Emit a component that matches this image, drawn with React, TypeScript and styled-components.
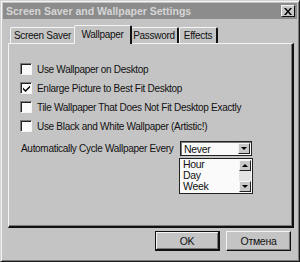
import React from 'react';
import styled, { createGlobalStyle } from 'styled-components';

const GlobalStyle = createGlobalStyle`
  html, body {
    margin: 0;
    padding: 0;
    background: #c4c4c4;
  }
  * {
    box-sizing: border-box;
  }
`;

const options = [
  { label: 'Use Wallpaper on Desktop', checked: false },
  { label: 'Enlarge Picture to Best Fit Desktop', checked: true },
  { label: 'Tile Wallpaper That Does Not Fit Desktop Exactly', checked: false },
  { label: 'Use Black and White Wallpaper (Artistic!)', checked: false },
];

const tabs = [
  { label: 'Screen Saver', width: 66 },
  { label: 'Wallpaper', width: 54 },
  { label: 'Password', width: 49 },
  { label: 'Effects', width: 39 },
];

const App = () => {
  return (
    <>
      <GlobalStyle />
      <Window>
        <TitleBar>
          <TitleText>Screen Saver and Wallpaper Settings</TitleText>
          <CloseButton>
            <svg width="8" height="7" viewBox="0 0 8 7">
              <path d="M0 0h2l2 2.5L6 0h2L5 3.5 8 7H6L4 4.5 2 7H0l3-3.5z" fill="#000" />
            </svg>
          </CloseButton>
        </TitleBar>
        <Body>
          <TabRow>
            {tabs.map((t) => (
              <Tab key={t.label} $width={t.width} $active={t.label === 'Wallpaper'}>
                {t.label}
              </Tab>
            ))}
          </TabRow>
          <Panel>
            <CheckList>
              {options.map((o) => (
                <CheckRow key={o.label}>
                  <CheckBox>
                    {o.checked && (
                      <svg width="7" height="7" viewBox="0 0 7 7">
                        <path d="M0 2.5l2.5 2.5L7 0.5v2L2.5 7 0 4.5z" fill="#000" />
                      </svg>
                    )}
                  </CheckBox>
                  <CheckLabel>{o.label}</CheckLabel>
                </CheckRow>
              ))}
            </CheckList>
            <CycleRow>
              <CycleLabel>Automatically Cycle Wallpaper Every</CycleLabel>
              <ComboWrap>
                <Combo>
                  <ComboValue>Never</ComboValue>
                  <ArrowButton>
                    <DownArrow />
                  </ArrowButton>
                </Combo>
                <DropList>
                  <ListItems>
                    <ListItem>Hour</ListItem>
                    <ListItem>Day</ListItem>
                    <ListItem>Week</ListItem>
                  </ListItems>
                  <ScrollBar>
                    <ArrowButton>
                      <UpArrow />
                    </ArrowButton>
                    <ScrollTrack />
                    <ArrowButton>
                      <DownArrow />
                    </ArrowButton>
                  </ScrollBar>
                </DropList>
              </ComboWrap>
            </CycleRow>
          </Panel>
          <Footer>
            <Button $default>OK</Button>
            <Button>Отмена</Button>
          </Footer>
        </Body>
      </Window>
    </>
  );
};

const Window = styled.div`
  width: 300px;
  height: 262px;
  background: #c4c4c4;
  border-top: 1px solid #d4d4d4;
  border-left: 1px solid #d4d4d4;
  border-right: 1px solid #1a1a1a;
  border-bottom: 1px solid #1a1a1a;
  box-shadow: inset 1px 1px 0 #f4f4f4, inset -1px -1px 0 #7a7a7a;
  padding: 2px;
  display: flex;
  flex-direction: column;
  font-family: "Liberation Sans", Arial, sans-serif;
  font-size: 10px;
  letter-spacing: -0.3px;
  color: #111;
`;

const TitleBar = styled.div`
  height: 16px;
  background: #8c8c8c;
  display: flex;
  align-items: center;
  justify-content: space-between;
  padding: 0 2px 0 3px;
`;

const TitleText = styled.div`
  font-weight: bold;
  font-size: 10.5px;
  letter-spacing: 0;
  color: #d6d6d6;
  white-space: nowrap;
`;

const CloseButton = styled.div`
  width: 14px;
  height: 12px;
  background: #c8c8c8;
  border-top: 1px solid #f4f4f4;
  border-left: 1px solid #f4f4f4;
  border-right: 1px solid #111;
  border-bottom: 1px solid #111;
  display: flex;
  align-items: center;
  justify-content: center;
`;

const Body = styled.div`
  flex: 1;
  display: flex;
  flex-direction: column;
  padding: 6px 3px 0 5px;
`;

const TabRow = styled.div`
  display: flex;
  align-items: flex-end;
  height: 18px;
  padding-left: 2px;
  position: relative;
  z-index: 1;
`;

const Tab = styled.div<{ $active?: boolean; $width: number }>`
  width: ${(p) => (p.$active ? p.$width + 4 : p.$width)}px;
  height: ${(p) => (p.$active ? '19px' : '16px')};
  margin: ${(p) => (p.$active ? '0 -2px -1px -2px' : '0')};
  padding-top: ${(p) => (p.$active ? '3px' : '2px')};
  background: #c4c4c4;
  border-top: 1px solid #f4f4f4;
  border-left: 1px solid #f4f4f4;
  border-right: 2px solid #111;
  border-top-left-radius: 2px;
  border-top-right-radius: 2px;
  font-size: 10px;
  text-align: center;
  white-space: nowrap;
  position: relative;
  z-index: ${(p) => (p.$active ? 2 : 0)};
`;

const Panel = styled.div`
  height: 185px;
  border-top: 1px solid #f4f4f4;
  border-left: 1px solid #f4f4f4;
  border-right: 2px solid #111;
  border-bottom: 2px solid #111;
  box-shadow: inset -1px -1px 0 #7a7a7a;
  padding: 19px 10px 0 11px;
  display: flex;
  flex-direction: column;
`;

const CheckList = styled.div`
  display: flex;
  flex-direction: column;
  gap: 7px;
`;

const CheckRow = styled.div`
  display: flex;
  align-items: center;
  gap: 5px;
  height: 12px;
`;

const CheckBox = styled.div`
  width: 12px;
  height: 12px;
  background: #fafafa;
  border-top: 1px solid #7a7a7a;
  border-left: 1px solid #7a7a7a;
  border-right: 1px solid #f4f4f4;
  border-bottom: 1px solid #f4f4f4;
  box-shadow: inset 1px 1px 0 #222;
  display: flex;
  align-items: center;
  justify-content: center;
  padding: 1px 0 0 1px;
`;

const CheckLabel = styled.span`
  white-space: nowrap;
`;

const CycleRow = styled.div`
  display: flex;
  align-items: center;
  margin-top: 9px;
  padding-left: 1px;
`;

const CycleLabel = styled.span`
  white-space: nowrap;
  width: 159px;
`;

const ComboWrap = styled.div`
  position: relative;
`;

const Combo = styled.div`
  width: 72px;
  height: 15px;
  background: #fafafa;
  border: 1px solid #222;
  box-shadow: inset 1px 1px 0 #7a7a7a;
  display: flex;
  align-items: center;
  padding: 0 1px 0 3px;
`;

const ComboValue = styled.span`
  flex: 1;
  font-size: 10.5px;
`;

const ArrowButton = styled.div`
  width: 12px;
  height: 11px;
  background: #c8c8c8;
  border-top: 1px solid #f4f4f4;
  border-left: 1px solid #f4f4f4;
  border-right: 1px solid #222;
  border-bottom: 1px solid #222;
  display: flex;
  align-items: center;
  justify-content: center;
`;

const DownArrow = styled.div`
  width: 0;
  height: 0;
  border-left: 3px solid transparent;
  border-right: 3px solid transparent;
  border-top: 3px solid #000;
`;

const UpArrow = styled.div`
  width: 0;
  height: 0;
  border-left: 3px solid transparent;
  border-right: 3px solid transparent;
  border-bottom: 3px solid #000;
`;

const DropList = styled.div`
  position: absolute;
  left: -1px;
  top: 17px;
  width: 74px;
  height: 36px;
  background: #fafafa;
  border: 1px solid #222;
  display: flex;
`;

const ListItems = styled.div`
  flex: 1;
  display: flex;
  flex-direction: column;
  padding: 0 0 0 3px;
`;

const ListItem = styled.div`
  font-size: 10.5px;
  line-height: 11px;
`;

const ScrollBar = styled.div`
  width: 13px;
  display: flex;
  flex-direction: column;
  padding: 1px 1px 1px 0;
`;

const ScrollTrack = styled.div`
  flex: 1;
  background: #e4e4e4;
`;

const Footer = styled.div`
  display: flex;
  justify-content: flex-end;
  gap: 6px;
  padding: 3px 3px 0 0;
`;

const Button = styled.div<{ $default?: boolean }>`
  width: 65px;
  height: 20px;
  background: #c4c4c4;
  border-top: 1px solid ${(p) => (p.$default ? '#111' : '#f4f4f4')};
  border-left: 1px solid ${(p) => (p.$default ? '#111' : '#f4f4f4')};
  border-right: ${(p) => (p.$default ? '2px' : '1px')} solid #111;
  border-bottom: ${(p) => (p.$default ? '2px' : '1px')} solid #111;
  box-shadow: ${(p) => (p.$default ? 'inset 1px 1px 0 #f4f4f4, inset -1px -1px 0 #7a7a7a' : 'inset -1px -1px 0 #7a7a7a')};
  display: flex;
  align-items: center;
  justify-content: center;
  font-size: 10.5px;
`;

export default App;
